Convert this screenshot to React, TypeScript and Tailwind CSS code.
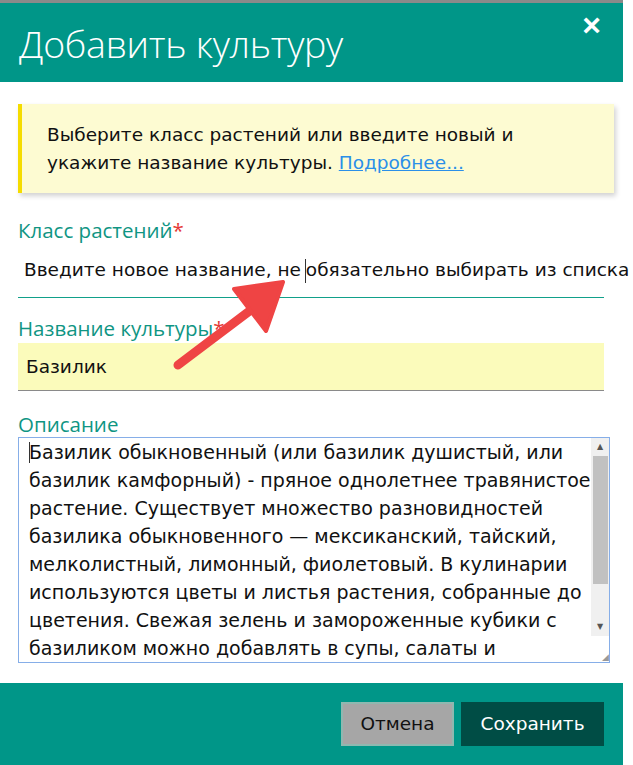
import React from "react";

const teal = "bg-[#009688]";

const description =
  "Базилик обыкновенный (или базилик душистый, или базилик камфорный) - пряное однолетнее травянистое растение. Существует множество разновидностей базилика обыкновенного — мексиканский, тайский, мелколистный, лимонный, фиолетовый. В кулинарии используются цветы и листья растения, собранные до цветения. Свежая зелень и замороженные кубики с базиликом можно добавлять в супы, салаты и";

function Arrow() {
  // red annotation arrow drawn over the form
  return (
    <svg className="absolute left-[160px] top-[268px] pointer-events-none" width="140" height="115" viewBox="0 0 140 115">
      <line x1="18" y1="97" x2="96" y2="38" stroke="#ef4444" strokeWidth="9" strokeLinecap="round" />
      <polygon points="123,14 74,21 106,63" fill="#ef4444" stroke="#ef4444" strokeWidth="4" strokeLinejoin="round" />
    </svg>
  );
}

export default function App() {
  return (
    <div className="relative w-[633px] h-[765px] bg-white overflow-hidden font-['DejaVu_Sans',sans-serif]">
      <div className="w-[623px] h-full border-t-[3px] border-[#8a8a8a] flex flex-col">
        <div className={`${teal} h-[79px] flex items-start justify-between pl-[19px] pr-[22px]`}>
          <h1 className="mt-[19px] text-[37.5px] leading-[44px] text-white font-['Open_Sans',sans-serif] font-light tracking-[-0.3px]">
            Добавить культуру
          </h1>
          <span className="mt-[4px] text-[32px] font-bold text-white leading-[36px] font-['Liberation_Sans',sans-serif]">×</span>
        </div>

        <div className="flex-1 px-[18px] pt-[22px]">
          <div className="h-[89px] w-[596px] bg-[#fdfbd2] border-l-[4px] border-[#f5dc00] shadow-[2px_3px_5px_rgba(0,0,0,0.18)] pl-[25px] pt-[17px] text-[18.5px] leading-[28px] text-[#111]">
            Выберите класс растений или введите новый и
            <br />
            укажите название культуры.{" "}
            <a className="text-[#2b8fe8] underline">Подробнее...</a>
          </div>

          <div className="mt-[25px] text-[20.5px] leading-[24px] text-[#0f9583] font-['Open_Sans',sans-serif]">
            Класс растений<span className="text-[#e53935]">*</span>
          </div>
          <div className="h-[56px] w-[586px] border-b border-[#11a08a] pt-[15px] pl-[6px] text-[18.5px] leading-[26px] text-[#111] whitespace-nowrap">
            Введите новое название, не <span className="inline-block w-px h-[24px] bg-[#333] align-middle -ml-[2px]"></span>обязательно выбирать из списка
          </div>

          <div className="mt-[18px] text-[20.5px] leading-[24px] text-[#0f9583] font-['Open_Sans',sans-serif]">
            Название культуры<span className="text-[#e53935]">*</span>
          </div>
          <div className="mt-[3px] h-[48px] w-[586px] bg-[#fbfbbb] border-b border-[#8a8a8a] pl-[8px] flex items-center text-[18.5px] text-[#111]">
            Базилик
          </div>

          <div className="mt-[21px] text-[20.5px] leading-[24px] text-[#0f9583] font-['Open_Sans',sans-serif]">
            Описание
          </div>
          <div className="mt-[1px] h-[226px] w-[592px] border border-[#86aee8] flex">
            <div className="flex-1 overflow-hidden pl-[10px] text-[19px] leading-[28px] text-[#111] relative">
              <span className="absolute left-[10px] top-[4px] w-px h-[21px] bg-[#333]"></span>
              {description}
            </div>
            <div className="w-[18px] bg-[#f0f0f0] flex flex-col items-center">
              <span className="text-[8px] leading-[18px] text-[#555]">▲</span>
              <div className="w-[15px] h-[128px] bg-[#c1c1c1]"></div>
              <div className="flex-1"></div>
              <span className="text-[8px] leading-[18px] text-[#555]">▼</span>
              <div className="h-[26px] w-full bg-white flex items-end justify-end">
                <span className="text-[9px] leading-[9px] text-[#999]">◢</span>
              </div>
            </div>
          </div>
        </div>

        <div className={`${teal} h-[82px] flex items-center justify-end gap-[7px] pr-[19px]`}>
          <button className="h-[44px] w-[113px] bg-[#a6a6a6] text-[#111] text-[18.5px] border-2 border-[#8fb8b0]">
            Отмена
          </button>
          <button className="h-[44px] w-[143px] bg-[#004d45] text-white text-[18.5px]">Сохранить</button>
        </div>
      </div>
      <Arrow />
    </div>
  );
}
